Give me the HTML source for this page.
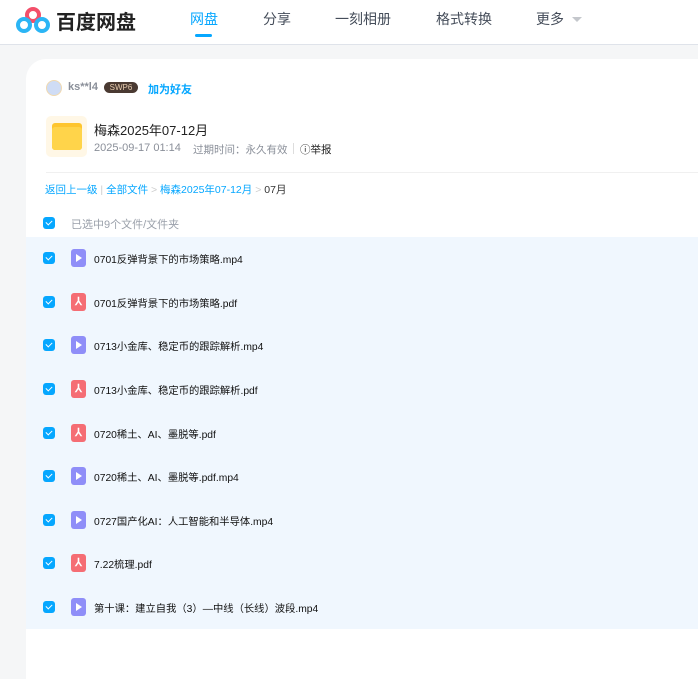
<!DOCTYPE html>
<html><head><meta charset="utf-8"><style>
*{margin:0;padding:0;box-sizing:border-box}
body{width:698px;height:658px;overflow:hidden;background:#f5f6f7;font-family:"Liberation Sans","Noto Sans CJK SC",sans-serif;position:relative}
.hdr{position:absolute;left:0;top:0;width:698px;height:45px;background:#fff;border-bottom:1px solid #dfe3ea}
.a{position:absolute;white-space:nowrap}
.nav{font-size:14px;color:#454d5a;top:9px}
.card{position:absolute;left:26px;top:59px;width:700px;height:620px;background:#fff;border-radius:20px 0 0 0}
.cb{position:absolute;left:43px;width:12px;height:12px;border-radius:3px;background:#06a7ff}
.cb:after{content:"";position:absolute;left:3px;top:2.5px;width:5px;height:3px;border-left:1.6px solid #fff;border-bottom:1.6px solid #fff;transform:rotate(-45deg)}
.ic{position:absolute;left:71px;width:15px;height:18px;border-radius:3px}
.mp4{background:#8f8ef8}
.mp4:after{content:"";position:absolute;left:5px;top:5px;border-left:6px solid #fff;border-top:4px solid transparent;border-bottom:4px solid transparent}
.pdf{background:#f56d74;color:#fff;font-size:11px;text-align:center;line-height:18px;font-weight:bold}
.fn{position:absolute;left:94px;font-size:10.3px;color:#111;white-space:nowrap}
</style></head><body>
<div class="hdr"></div>
<svg class="a" style="left:16px;top:6px" width="34" height="28" viewBox="0 0 34 28">
<circle cx="17" cy="9" r="6" fill="none" stroke="#f34f6a" stroke-width="4"/>
<circle cx="8" cy="19" r="6" fill="none" stroke="#2bb5f5" stroke-width="4"/>
<circle cx="26" cy="19" r="6" fill="none" stroke="#2bb5f5" stroke-width="4"/>
</svg>
<div class="a" style="left:56px;top:6px;font-size:20px;font-weight:bold;color:#222">百度网盘</div>
<div class="a nav" style="left:190px;color:#06a7ff">网盘</div>
<div class="a" style="left:195px;top:34px;width:17px;height:3px;border-radius:2px;background:#06a7ff"></div>
<div class="a nav" style="left:263px">分享</div>
<div class="a nav" style="left:335px">一刻相册</div>
<div class="a nav" style="left:436px">格式转换</div>
<div class="a nav" style="left:536px">更多</div>
<div class="a" style="left:572px;top:17px;border-top:5px solid #c4c7cc;border-left:5px solid transparent;border-right:5px solid transparent"></div>
<div class="card"></div>
<div class="a" style="left:46px;top:80px;width:16px;height:16px;border-radius:50%;background:#cfdcf5;border:1px solid #f0d9b0"></div>
<div class="a" style="left:68px;top:81px;font-size:11px;color:#8a8f99;font-weight:bold">ks**l4</div>
<div class="a" style="left:104px;top:82px;width:34px;height:11px;border-radius:6px;background:#4a3a32;color:#e8cdb0;font-size:8px;text-align:center;line-height:11px">SWP6</div>
<div class="a" style="left:148px;top:81px;font-size:11px;color:#06a7ff;font-weight:bold">加为好友</div>
<div class="a" style="left:46px;top:116px;width:41px;height:41px;border-radius:5px;background:#fff7e6"></div>
<div class="a" style="left:52px;top:123px;width:30px;height:27px;border-radius:3px;background:#fec52e"></div>
<div class="a" style="left:52px;top:127px;width:30px;height:23px;border-radius:3px;background:#ffd44a"></div>
<div class="a" style="left:94px;top:120px;font-size:13px;color:#222">梅森2025年07-12月</div>
<div class="a" style="left:94px;top:142px;font-size:11px;color:#8a8f99">2025-09-17 01:14</div>
<div class="a" style="left:193px;top:142px;font-size:10.5px;color:#8a8f99">过期时间：永久有效</div>
<div class="a" style="left:293px;top:143px;width:1px;height:11px;background:#ddd"></div>
<div class="a" style="left:300px;top:142px;font-size:10.5px;color:#222">&#9432;举报</div>
<div class="a" style="left:46px;top:172px;width:660px;height:1px;background:#f0f0f0"></div>
<div class="a" style="left:45px;top:182px;font-size:10.5px;color:#06a7ff">返回上一级 <span style="color:#ccc">|</span> 全部文件 <span style="color:#ccc">&gt;</span> 梅森2025年07-12月 <span style="color:#ccc">&gt;</span> <span style="color:#333">07月</span></div>
<div class="cb" style="top:217px"></div>
<div class="a" style="left:71px;top:216px;font-size:11px;color:#9aa0aa">已选中9个文件/文件夹</div>
<div class="a" style="left:26px;top:237px;width:672px;height:392px;background:#f0f7fe"></div>
<div class="cb" style="top:252px"></div><div class="ic mp4" style="top:249px"></div><div class="fn" style="top:251px">0701反弹背景下的市场策略.mp4</div>
<div class="cb" style="top:296px"></div><div class="ic pdf" style="top:293px">⅄</div><div class="fn" style="top:295px">0701反弹背景下的市场策略.pdf</div>
<div class="cb" style="top:339px"></div><div class="ic mp4" style="top:336px"></div><div class="fn" style="top:338px">0713小金库、稳定币的跟踪解析.mp4</div>
<div class="cb" style="top:383px"></div><div class="ic pdf" style="top:380px">⅄</div><div class="fn" style="top:382px">0713小金库、稳定币的跟踪解析.pdf</div>
<div class="cb" style="top:427px"></div><div class="ic pdf" style="top:424px">⅄</div><div class="fn" style="top:426px">0720稀土、AI、墨脱等.pdf</div>
<div class="cb" style="top:470px"></div><div class="ic mp4" style="top:467px"></div><div class="fn" style="top:469px">0720稀土、AI、墨脱等.pdf.mp4</div>
<div class="cb" style="top:514px"></div><div class="ic mp4" style="top:511px"></div><div class="fn" style="top:513px">0727国产化AI：人工智能和半导体.mp4</div>
<div class="cb" style="top:557px"></div><div class="ic pdf" style="top:554px">⅄</div><div class="fn" style="top:556px">7.22梳理.pdf</div>
<div class="cb" style="top:601px"></div><div class="ic mp4" style="top:598px"></div><div class="fn" style="top:600px">第十课：建立自我（3）—中线（长线）波段.mp4</div>
</body></html>
